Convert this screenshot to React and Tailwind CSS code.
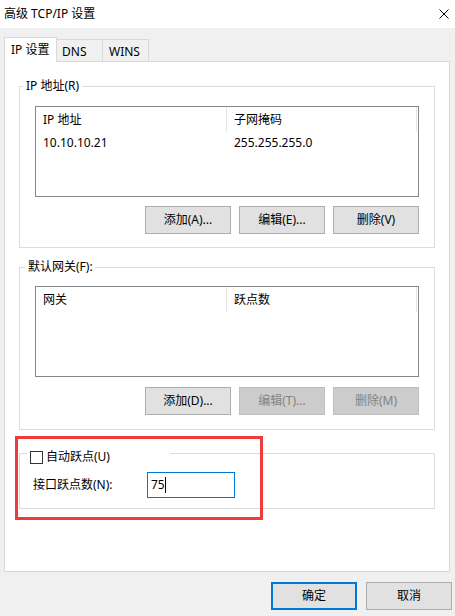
function Btn({ children, disabled, primary, className = "" }) {
  let look = "border border-[#adadad] bg-[#e1e1e1] text-black";
  if (disabled) look = "border border-[#bfbfbf] bg-[#cccccc] text-[#838383]";
  if (primary) look = "border-2 border-[#0078d7] bg-[#e1e1e1] text-black";
  return (
    <div className={`w-[86px] h-[28px] flex items-center justify-center leading-[16px] ${look} ${className}`}>
      {children}
    </div>
  );
}

function ListBox({ cols, rows = [] }) {
  return (
    <div className="h-[91px] border border-[#828790] bg-white">
      <div className="flex h-[25px]">
        {cols.map((c, i) => (
          <div
            key={i}
            className={`${i === 0 ? "w-[191px]" : "w-[190px]"} border-r border-[#e5e5e5] pl-[7px] flex items-center leading-[16px]`}
          >
            {c}
          </div>
        ))}
      </div>
      {rows.map((r, i) => (
        <div key={i} className="flex h-[22px] items-center leading-[16px]">
          {r.map((v, j) => (
            <div key={j} className={`${j === 0 ? "w-[191px]" : "w-[190px]"} pl-[7px]`}>
              {v}
            </div>
          ))}
        </div>
      ))}
    </div>
  );
}

export default function App() {
  return (
    <div className="relative w-[455px] h-[616px] bg-[#f0f0f0] flex flex-col text-[12px] text-black font-['Noto_Sans','Noto_Sans_CJK_SC',sans-serif]">
      {/* title bar */}
      <div className="h-[28px] shrink-0 bg-white flex items-center justify-between pl-[4px] pr-[6px] leading-[16px]">
        <span>高级 TCP/IP 设置</span>
        <svg width="10" height="10" viewBox="0 0 10 10">
          <path d="M0.5 0.5L9.5 9.5M9.5 0.5L0.5 9.5" stroke="#000" strokeWidth="1" fill="none" />
        </svg>
      </div>

      <div className="pl-[4px] pt-[9px]">
        {/* tabs */}
        <div className="flex items-end h-[24px] leading-[16px]">
          <div className="relative z-10 w-[53px] h-[25px] -mb-px bg-white border border-b-0 border-[#d9d9d9] pl-[6px] pt-[4px]">
            IP 设置
          </div>
          <div className="w-[46px] h-[22px] border-t border-r border-[#d9d9d9] pl-[5px] pt-[4px]">DNS</div>
          <div className="w-[46px] h-[22px] border-t border-r border-[#d9d9d9] pl-[6px] pt-[4px]">WINS</div>
        </div>

        {/* panel */}
        <div className="w-[446px] h-[511px] border border-[#d9d9d9] bg-white px-[14px]">
          <fieldset className="mt-[16px] border border-[#dcdcdc] pl-[3px] pr-[15px] pt-[12px] pb-[13px]">
            <legend className="px-[3px] leading-[16px]">IP 地址(R)</legend>
            <div className="ml-[12px]">
              <ListBox cols={["IP 地址", "子网掩码"]} rows={[["10.10.10.21", "255.255.255.0"]]} />
              <div className="flex justify-end gap-[8px] mt-[9px]">
                <Btn>添加(A)...</Btn>
                <Btn>编辑(E)...</Btn>
                <Btn>删除(V)</Btn>
              </div>
            </div>
          </fieldset>

          <fieldset className="mt-[11px] border border-[#dcdcdc] pl-[6px] pr-[15px] pt-[11px] pb-[14px]">
            <legend className="px-[2px] leading-[16px]">默认网关(F):</legend>
            <div className="ml-[9px]">
              <ListBox cols={["网关", "跃点数"]} />
              <div className="flex justify-end gap-[8px] mt-[10px]">
                <Btn>添加(D)...</Btn>
                <Btn disabled>编辑(T)...</Btn>
                <Btn disabled>删除(M)</Btn>
              </div>
            </div>
          </fieldset>

          <fieldset className="mt-[12px] border border-[#dcdcdc] pl-[7px] pr-[15px] pt-[7px] pb-[10px]">
            <legend className="w-[143px] pl-[3px] pt-[7px]">
              <div className="flex items-center h-[16px] leading-[16px]">
                <span className="w-[13px] h-[13px] border border-[#333333] bg-white" />
                <span className="ml-[3px]">自动跃点(U)</span>
              </div>
            </legend>
            <div className="flex items-center pl-[6px]">
              <span className="w-[114px] leading-[16px]">接口跃点数(N):</span>
              <div className="w-[88px] h-[26px] border border-[#0078d7] flex items-center pl-[3px] leading-[16px]">
                <span>75</span>
                <span className="w-px h-[16px] bg-black" />
              </div>
            </div>
          </fieldset>
        </div>
      </div>

      {/* dialog buttons */}
      <div className="flex justify-end gap-[9px] pr-[3px] pt-[10px]">
        <Btn primary>确定</Btn>
        <Btn>取消</Btn>
      </div>

      {/* red annotation */}
      <div className="absolute left-[15px] top-[436px] w-[248px] h-[84px] border-[3px] border-[#ef3b3b] pointer-events-none" />
    </div>
  );
}
